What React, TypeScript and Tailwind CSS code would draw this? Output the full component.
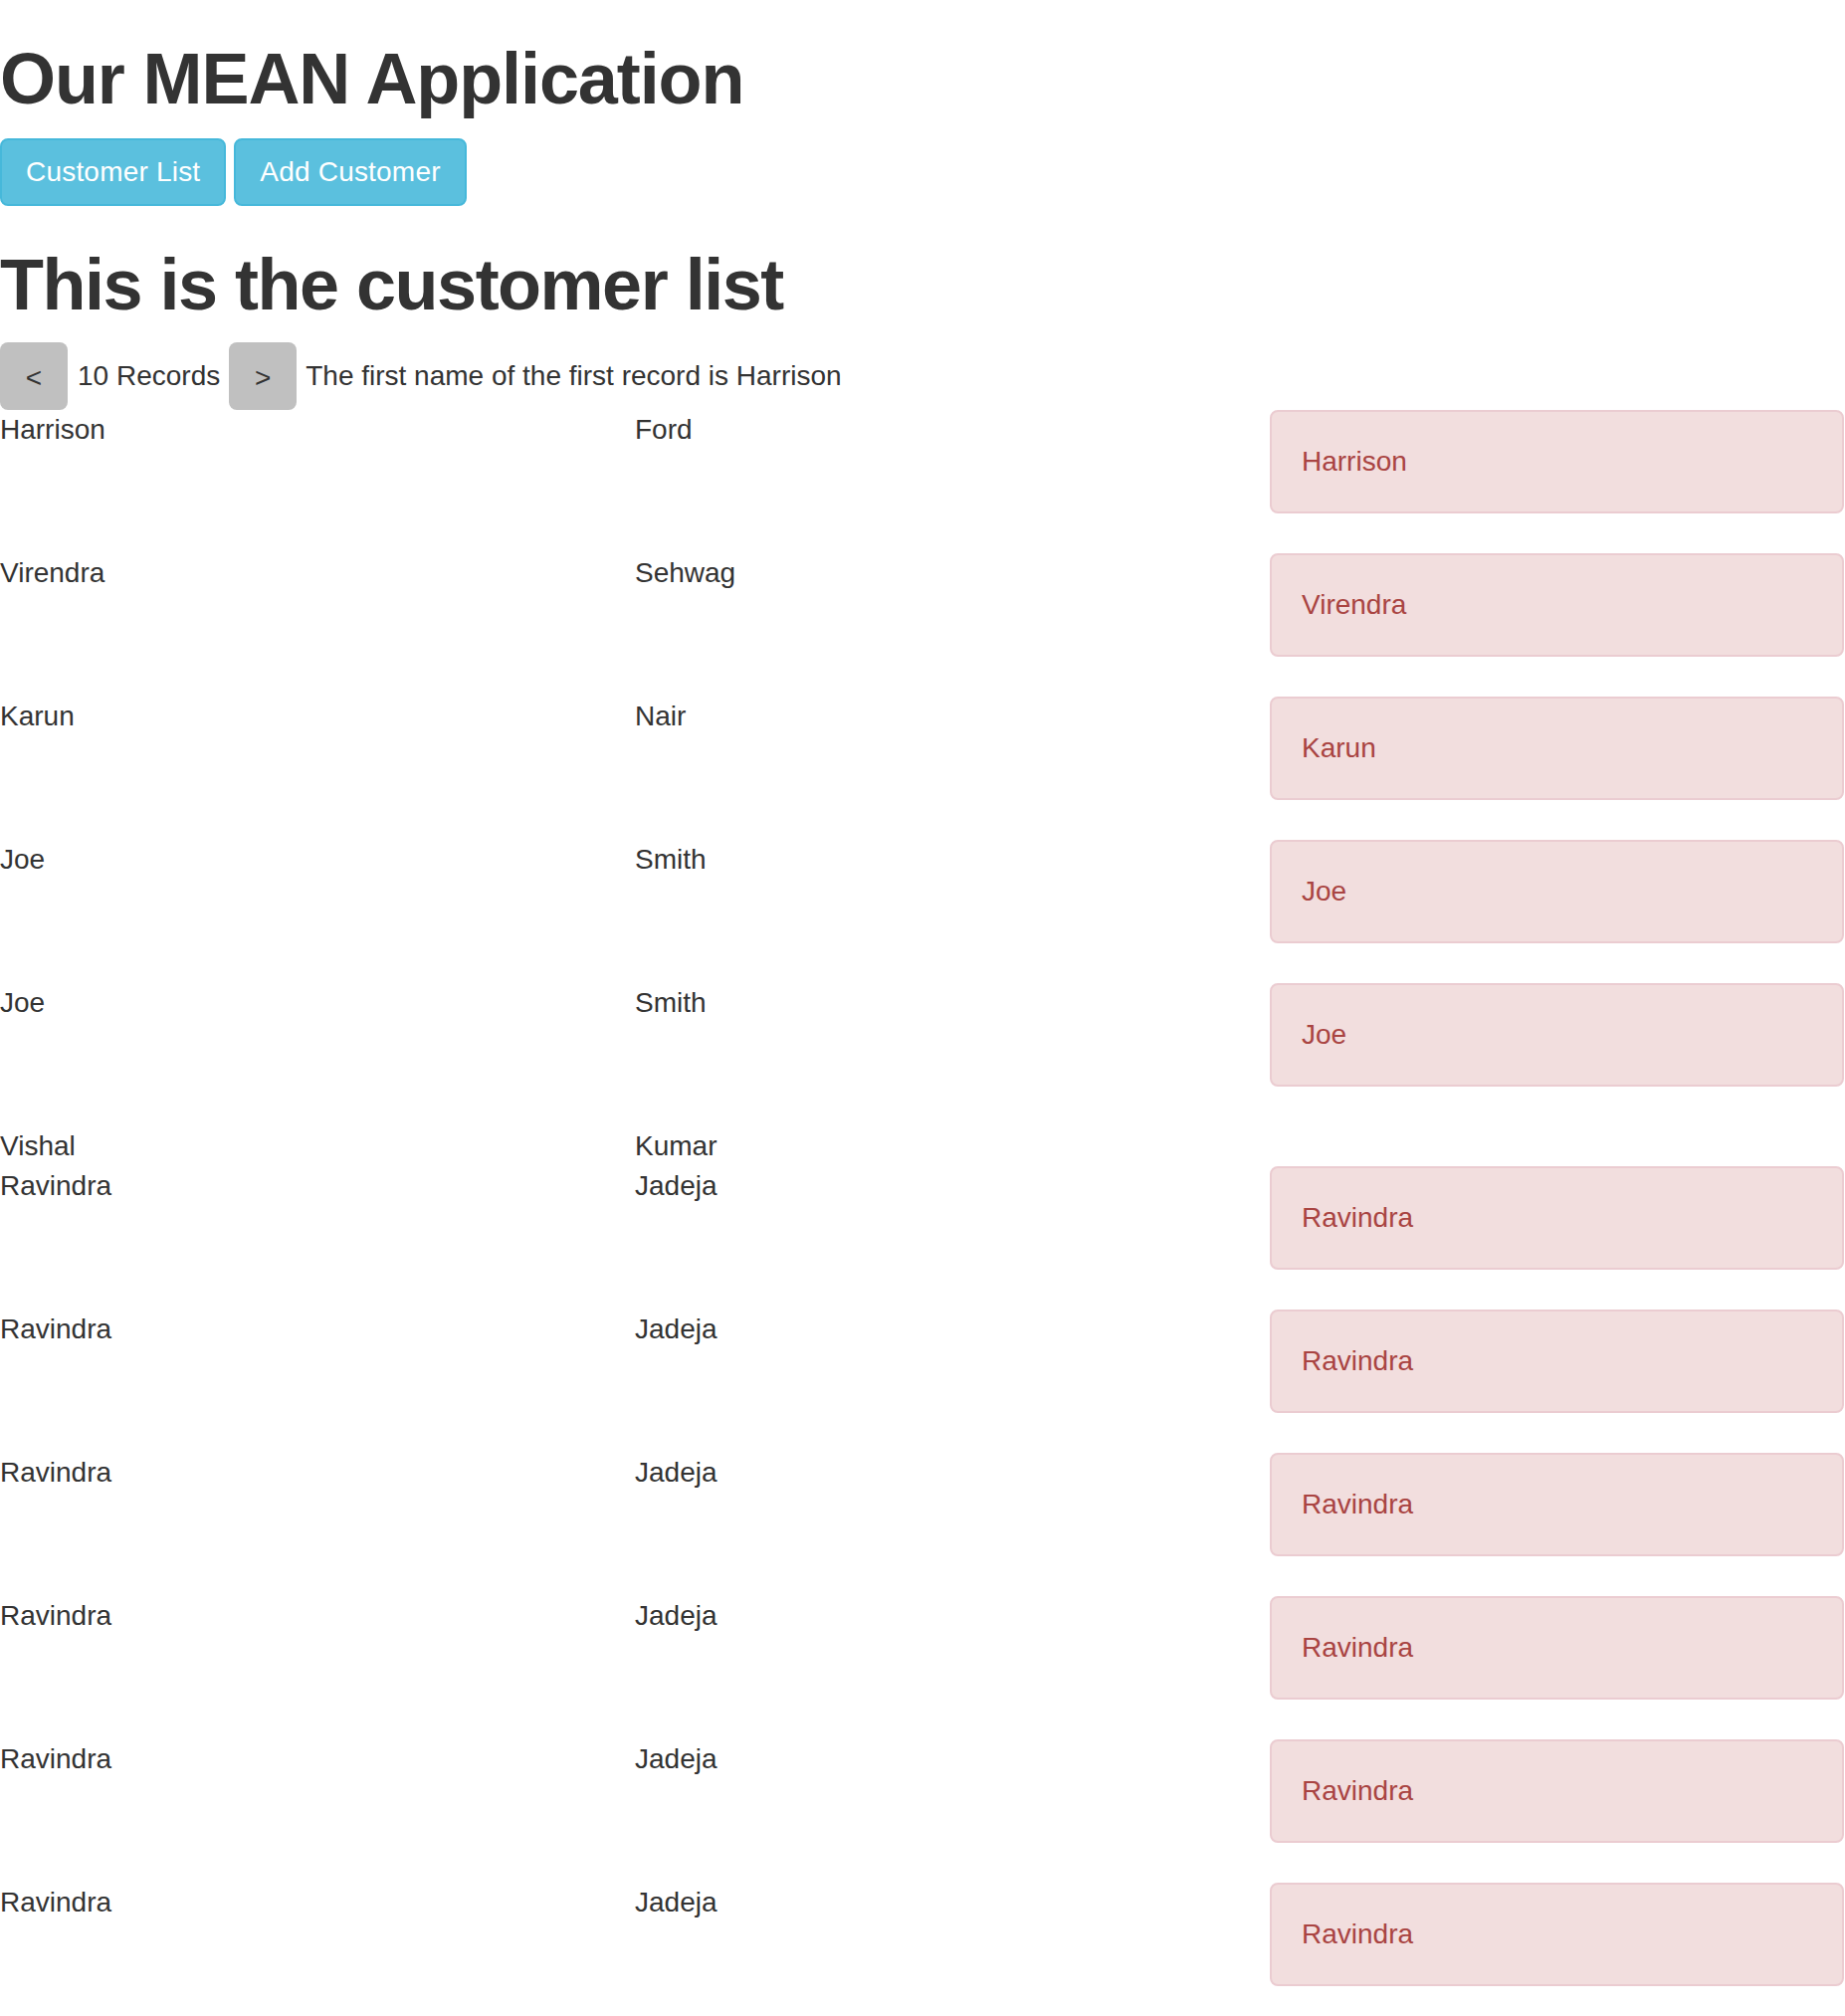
import { useState } from 'react';

type Customer = { firstName: string; lastName: string; showAlert: boolean };

const customers: Customer[] = [
  { firstName: 'Harrison', lastName: 'Ford', showAlert: true },
  { firstName: 'Virendra', lastName: 'Sehwag', showAlert: true },
  { firstName: 'Karun', lastName: 'Nair', showAlert: true },
  { firstName: 'Joe', lastName: 'Smith', showAlert: true },
  { firstName: 'Joe', lastName: 'Smith', showAlert: true },
  { firstName: 'Vishal', lastName: 'Kumar', showAlert: false },
  { firstName: 'Ravindra', lastName: 'Jadeja', showAlert: true },
  { firstName: 'Ravindra', lastName: 'Jadeja', showAlert: true },
  { firstName: 'Ravindra', lastName: 'Jadeja', showAlert: true },
  { firstName: 'Ravindra', lastName: 'Jadeja', showAlert: true },
  { firstName: 'Ravindra', lastName: 'Jadeja', showAlert: true },
  { firstName: 'Ravindra', lastName: 'Jadeja', showAlert: true },
];

const App = () => {
  const [records] = useState(10);

  return (
    <div className="min-h-screen bg-white text-[#333] text-[28px] leading-[40px] font-['Liberation_Sans','Helvetica_Neue',Arial,sans-serif]">
      <h1 className="mt-[40px] mb-[20px] text-[72px] leading-[1.1] font-bold tracking-[-1.1px]">Our MEAN Application</h1>

      <div className="flex gap-[8px]">
        <button className="h-[68px] px-[24px] bg-[#5bc0de] border-2 border-[#46b8da] rounded-[8px] text-white text-[28px] leading-[40px] tracking-[0.2px]">
          Customer List
        </button>
        <button className="h-[68px] px-[24px] bg-[#5bc0de] border-2 border-[#46b8da] rounded-[8px] text-white text-[28px] leading-[40px] tracking-[0.2px]">
          Add Customer
        </button>
      </div>

      <h1 className="mt-[40px] mb-[18px] text-[72px] leading-[1.1] font-bold tracking-[-1.5px]">This is the customer list</h1>

      {/* paginacion */}
      <div className="flex items-center gap-[9px]">
        <button className="w-[68px] h-[68px] bg-[#c0c0c0] rounded-[8px] flex items-center justify-center text-[28px] pt-[4px]">
          &lt;
        </button>
        <span className="ml-px">{records} Records</span>
        <button className="w-[68px] h-[68px] bg-[#c0c0c0] rounded-[8px] flex items-center justify-center text-[28px] pt-[4px]">
          &gt;
        </button>
        <span>The first name of the first record is {customers[0].firstName}</span>
      </div>

      <div>
        {customers.map((c, i) => (
          <div key={i} className="grid grid-cols-[638px_638px_577px]">
            <div>{c.firstName}</div>
            <div>{c.lastName}</div>
            <div>
              {c.showAlert && (
                <div className="mb-[40px] p-[30px] bg-[#f2dede] border-2 border-[#ebccd1] rounded-[8px] text-[#a94442]">
                  {c.firstName}
                </div>
              )}
            </div>
          </div>
        ))}
      </div>
    </div>
  );
};

export default App;
